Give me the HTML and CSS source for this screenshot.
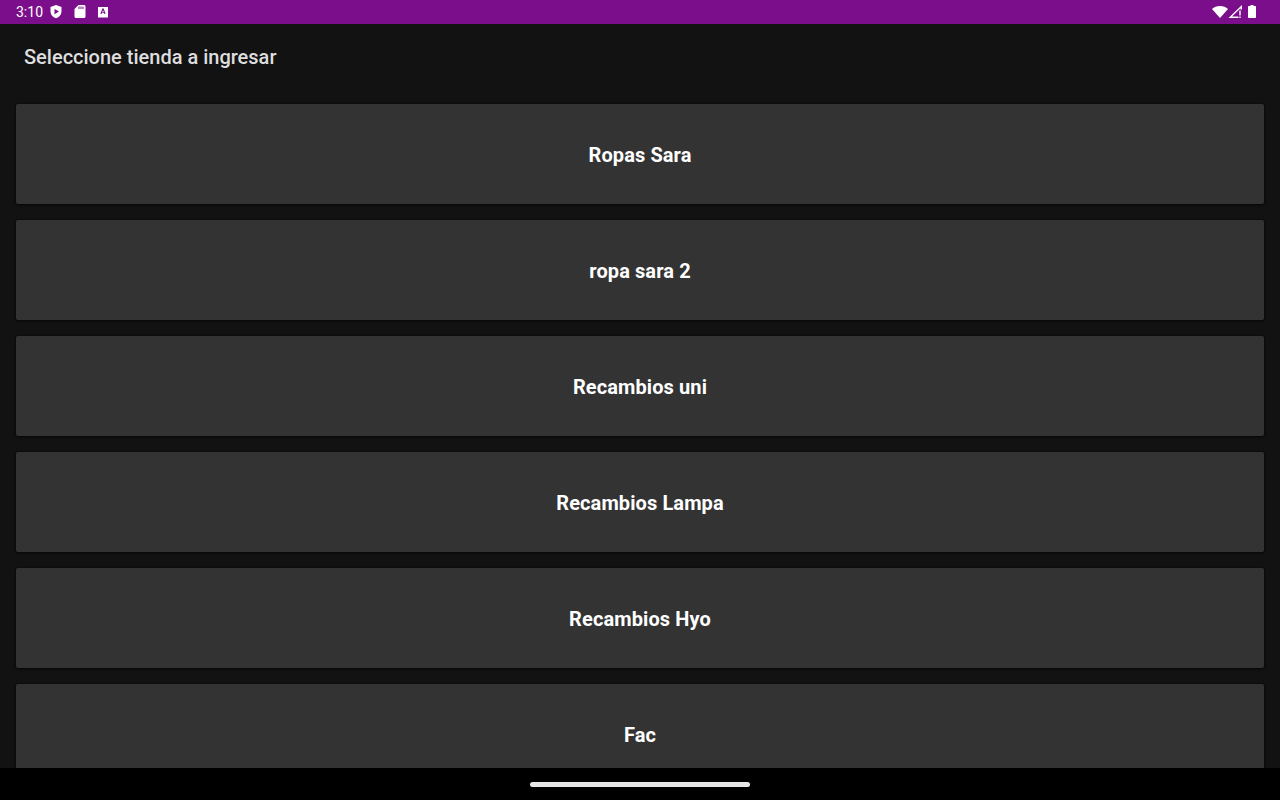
FILE: index.html
```html
<!DOCTYPE html>
<html lang="es">
<head>
  <meta charset="UTF-8">
  <title>Seleccione tienda</title>
  <link rel="stylesheet" href="styles.css">
</head>
<body>
  <div class="screen">
    <div class="status-bar">
      <div class="status-left">
        <span class="clock">3:10</span>
        <!-- shield -->
        <svg class="icon shield" width="14" height="14" viewBox="0 0 14 14"><path fill="#fff" fill-rule="evenodd" d="M7 0l5.500 2v4.500c0 3.200-2.300 5.600-5.500 6.700C3.800 12.100 1.500 9.700 1.500 6.500V2zM5.500 4v5.200L10 6.600z"/></svg>
        <!-- sd card -->
        <svg class="icon sd" width="12" height="14" viewBox="0 0 12 14"><path fill="#fff" fill-rule="evenodd" d="M4.500 0H10c.8 0 1.500.7 1.500 1.500v10c0 .8-.7 1.500-1.500 1.500H2c-.8 0-1.500-.7-1.500-1.500V4zM4.500 1.500V4h1V1.500zm2 0V4h1V1.500zm2 0V4h1V1.500z"/></svg>
        <!-- a box -->
        <svg class="icon abox" width="10" height="14" viewBox="0 0 10 14"><path fill="#fff" fill-rule="evenodd" d="M0 2h10v10.500H0zM4.300 3.500 2.400 9h1.200l.4-1.200h2L6.400 9h1.200L5.700 3.500zm.7 1.500.7 1.900H4.300z"/></svg>
      </div>
      <div class="status-right">
        <svg class="icon" width="16" height="14" viewBox="0 0 16 14"><path fill="#fff" d="M0 4C2 2 4.800 1 8 1s6 1 8 3l-8 9z"/></svg>
        <svg class="icon" width="15" height="14" viewBox="0 0 15 14"><path fill="#fff" fill-rule="evenodd" d="M14 0v4.500h-1.500V3.200L4 11.500h6.500V13H.5zM11.300 5.500h1.400v5h-1.400zm0 6h1.400V13h-1.400z"/></svg>
        <svg class="icon battery" width="8" height="14" viewBox="0 0 8 14"><path fill="#fff" d="M2.500 0h3v1H7c.6 0 1 .4 1 1v10c0 .6-.4 1-1 1H1c-.6 0-1-.4-1-1V2c0-.6.4-1 1-1h1.500z"/></svg>
      </div>
    </div>

    <div class="content">
      <h1 class="page-title">Seleccione tienda a ingresar</h1>
      <div class="store-list">
        <button class="store-card">Ropas Sara</button>
        <button class="store-card">ropa sara 2</button>
        <button class="store-card">Recambios uni</button>
        <button class="store-card">Recambios Lampa</button>
        <button class="store-card">Recambios Hyo</button>
        <button class="store-card">Fac</button>
      </div>
    </div>

    <div class="nav-bar"><div class="nav-handle"></div></div>
  </div>
</body>
</html>
```

FILE: styles.css
```css
html, body {
  margin: 0;
  height: 100%;
  overflow: hidden;
}
body {
  font-family: Roboto, 'Liberation Sans', sans-serif;
  background: #121212;
}
.screen {
  display: flex;
  flex-direction: column;
  height: 800px;
}
.status-bar {
  flex: 0 0 24px;
  display: flex;
  align-items: center;
  justify-content: space-between;
  padding: 0 24px 0 16px;
  background: #7b0f8b;
  color: #fff;
  font-size: 14px;
}
.status-left, .status-right {
  display: flex;
  align-items: center;
}
.icon {
  display: block;
}
.shield {
  margin-left: 6px;
}
.sd {
  margin-left: 11px;
}
.abox {
  margin-left: 12px;
}
.battery {
  margin-left: 5px;
}
.content {
  flex: 1;
  min-height: 0;
  overflow: hidden;
  background: #121212;
}
.page-title {
  margin: 0;
  padding: 21px 24px 0;
  height: 59px;
  box-sizing: border-box;
  line-height: 24px;
  font-size: 20px;
  font-weight: 500;
  color: #dedede;
}
.store-list {
  display: flex;
  flex-direction: column;
  gap: 16px;
  padding: 21px 16px 0;
}
.store-card {
  flex: 0 0 100px;
  display: block;
  width: 100%;
  padding: 2px 0 0;
  border: none;
  border-radius: 2px;
  background: #333;
  box-shadow: 0 1px 3px rgba(0,0,0,0.6), 0 0 2px rgba(0,0,0,0.5);
  color: #fff;
  font-family: inherit;
  font-size: 20px;
  font-weight: 700;
  letter-spacing: .1px;
  text-align: center;
}
.nav-bar {
  flex: 0 0 32px;
  display: flex;
  align-items: center;
  justify-content: center;
  background: #000;
}
.nav-handle {
  width: 220px;
  height: 5px;
  border-radius: 3px;
  background: #e6e6e6;
}
```
